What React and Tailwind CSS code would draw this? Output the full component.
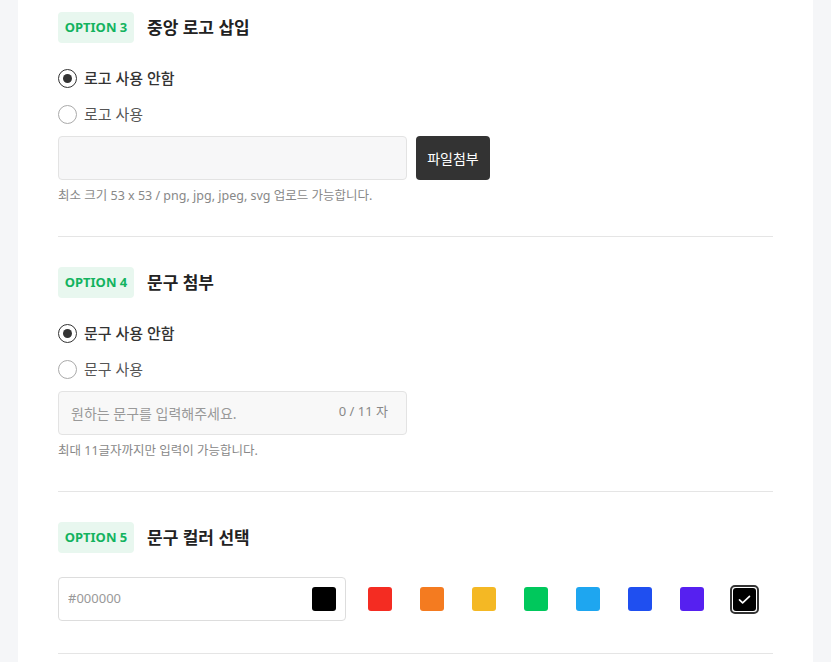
import { useState } from "react";

const swatches = ["#f42c22", "#f47b20", "#f4b824", "#00c85c", "#1ea6f0", "#1f4ff0", "#5620f0"];

function Badge({ num, title }) {
  return (
    <div className="flex items-center gap-[13px]">
      <span className="h-[31px] w-[76px] rounded-[4px] bg-[#e8f7ef] text-[#13b35f] text-[13px] font-bold flex items-center justify-center">
        OPTION {num}
      </span>
      <h3 className="text-[17px] font-bold text-[#222]">{title}</h3>
    </div>
  );
}

function Radio({ label, checked, onClick }) {
  return (
    <label onClick={onClick} className="flex items-center gap-[7px] h-[20px] cursor-pointer">
      <span
        className={`w-[19px] h-[19px] rounded-full flex items-center justify-center bg-white ${
          checked ? "border-[1.5px] border-[#333]" : "border border-[#aaa]"
        }`}
      >
        {checked && <span className="w-[9px] h-[9px] rounded-full bg-[#333]" />}
      </span>
      <span className={`text-[15px] ${checked ? "font-medium text-[#333]" : "text-[#555]"}`}>{label}</span>
    </label>
  );
}

export default function App() {
  const [logo, setLogo] = useState(0);
  const [phrase, setPhrase] = useState(0);
  const [color, setColor] = useState("#000000");
  const [text, setText] = useState("");

  return (
    <div
      className="min-h-[662px] bg-[#f5f6f8] pl-[18px] pr-[18px]"
      style={{ fontFamily: '"Noto Sans", "Noto Sans CJK KR", sans-serif' }}
    >
      <div className="bg-white min-h-[662px] px-[40px] pt-[12px]">
        {/* option 3 */}
        <section className="pb-[31px] border-b border-[#e5e5e5]">
          <Badge num={3} title="중앙 로고 삽입" />
          <div className="mt-[25px] flex flex-col gap-[16px]">
            <Radio label="로고 사용 안함" checked={logo === 0} onClick={() => setLogo(0)} />
            <Radio label="로고 사용" checked={logo === 1} onClick={() => setLogo(1)} />
          </div>
          <div className="mt-[12px] flex gap-[9px]">
            <div className="w-[349px] h-[44px] rounded-[4px] border border-[#e3e3e3] bg-[#f7f7f8]" />
            <button className="w-[74px] h-[44px] rounded-[4px] bg-[#333] text-white text-[14px]">파일첨부</button>
          </div>
          <p className="mt-[7px] text-[12.5px] leading-[18px] text-[#888]">
            최소 크기 53 x 53 / png, jpg, jpeg, svg 업로드 가능합니다.
          </p>
        </section>

        {/* option 4 */}
        <section className="pt-[30px] pb-[31px] border-b border-[#e5e5e5]">
          <Badge num={4} title="문구 첨부" />
          <div className="mt-[25px] flex flex-col gap-[16px]">
            <Radio label="문구 사용 안함" checked={phrase === 0} onClick={() => setPhrase(0)} />
            <Radio label="문구 사용" checked={phrase === 1} onClick={() => setPhrase(1)} />
          </div>
          <div className="mt-[12px] w-[349px] h-[44px] rounded-[4px] border border-[#e3e3e3] bg-[#f8f8f8] flex items-center pl-[12px] pr-[18px]">
            <input
              value={text}
              maxLength={11}
              onChange={(e) => setText(e.target.value)}
              placeholder="원하는 문구를 입력해주세요."
              className="flex-1 bg-transparent outline-none text-[14px] text-[#333] placeholder:text-[#999]"
            />
            <span className="text-[13px] text-[#888] -mt-[3px]">{text.length} / 11 자</span>
          </div>
          <p className="mt-[7px] text-[12.5px] leading-[18px] text-[#888]">최대 11글자까지만 입력이 가능합니다.</p>
        </section>

        {/* option 5 */}
        <section className="pt-[30px] pb-[32px] border-b border-[#e5e5e5]">
          <Badge num={5} title="문구 컬러 선택" />
          <div className="mt-[24px] flex items-center">
            <div className="w-[288px] h-[44px] rounded-[4px] border border-[#ddd] bg-white flex items-center pl-[9px] pr-[9px]">
              <input
                placeholder="#000000"
                className="flex-1 min-w-0 bg-transparent outline-none text-[13px] placeholder:text-[#999]"
              />
              <span className="w-[24px] h-[24px] rounded-[3px]" style={{ background: color }} />
            </div>
            <div className="ml-[22px] flex items-center gap-[28px]">
              {swatches.map((c) => (
                <button
                  key={c}
                  onClick={() => setColor(c)}
                  className="w-[24px] h-[24px] rounded-[3px]"
                  style={{ background: c }}
                />
              ))}
              <button
                onClick={() => setColor("#000000")}
                className="w-[29px] h-[29px] -ml-[2px] rounded-[5px] border-2 border-[#333] p-[1px]"
              >
                <span className="w-full h-full rounded-[3px] bg-black flex items-center justify-center">
                  <svg width="15" height="15" viewBox="0 0 24 24" fill="none" stroke="white" strokeWidth="2.6" strokeLinecap="round" strokeLinejoin="round">
                    <path d="M4 12.5l5 5L20 7" />
                  </svg>
                </span>
              </button>
            </div>
          </div>
        </section>
      </div>
    </div>
  );
}
